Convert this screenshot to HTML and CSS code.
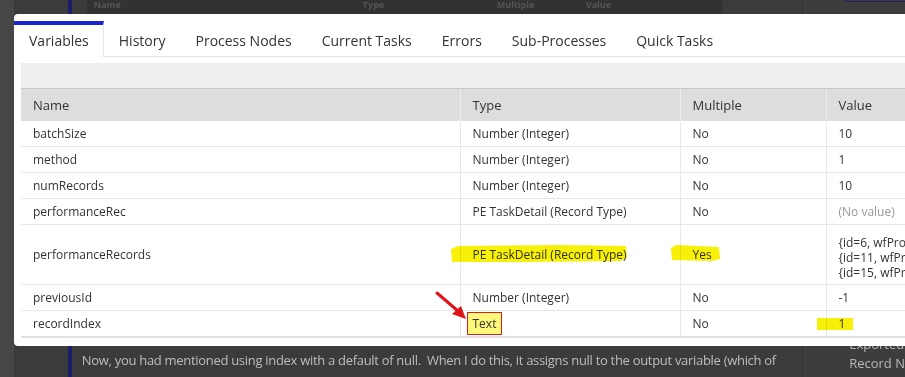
FILE: index.html
```html
<!DOCTYPE html>
<html>
	<head>
		<meta charset="UTF-8">
		<title>Process Details</title>
		<link rel="stylesheet" href="styles.css">
	</head>
	<body>
	<!-- page behind the dialog -->
	<div class="page">
		<div class="gutter"></div>
		<div class="article">
			<div class="bg-head">
				<span class="c1">Name</span>
				<span class="c2">Type</span>
				<span class="c3">Multiple</span>
				<span class="c4">Value</span>
			</div>
			<p class="bg-text">Now, you had mentioned using index with a default of null.&nbsp; When I do this, it assigns null to the output variable (which of course causes downstream failures because a record is expected)</p>
		</div>
		<div class="sidebar">
			<div class="side-box"></div>
			<p class="side-text">Exported<br>Record N<br>Wit</p>
		</div>
	</div>

	<!-- dialog -->
	<div class="modal">
		<div class="tabs">
			<a class="active" href="javascript:;">Variables</a>
			<a href="javascript:;">History</a>
			<a href="javascript:;">Process Nodes</a>
			<a href="javascript:;">Current Tasks</a>
			<a href="javascript:;">Errors</a>
			<a href="javascript:;">Sub-Processes</a>
			<a href="javascript:;">Quick Tasks</a>
		</div>
		<div class="content">
			<div class="toolbar"></div>
			<table class="vars">
				<colgroup>
					<col class="w-name">
					<col class="w-type">
					<col class="w-multi">
					<col class="w-value">
				</colgroup>
				<tr>
					<th>Name</th>
					<th>Type</th>
					<th>Multiple</th>
					<th>Value</th>
				</tr>
				<tr>
					<td>batchSize</td>
					<td>Number (Integer)</td>
					<td>No</td>
					<td>10</td>
				</tr>
				<tr>
					<td>method</td>
					<td>Number (Integer)</td>
					<td>No</td>
					<td>1</td>
				</tr>
				<tr>
					<td>numRecords</td>
					<td>Number (Integer)</td>
					<td>No</td>
					<td>10</td>
				</tr>
				<tr>
					<td>performanceRec</td>
					<td>PE TaskDetail (Record Type)</td>
					<td>No</td>
					<td class="empty">(No value)</td>
				</tr>
				<tr class="tall">
					<td>performanceRecords</td>
					<td>PE TaskDetail (Record Type)</td>
					<td>Yes</td>
					<td>
						<div class="lines">
							{id=6, wfProcessId=268436, taskName=Review}<br>
							{id=11, wfProcessId=268441, taskName=Review}<br>
							{id=15, wfProcessId=268445, taskName=Review}
						</div>
					</td>
				</tr>
				<tr>
					<td>previousId</td>
					<td>Number (Integer)</td>
					<td>No</td>
					<td>-1</td>
				</tr>
				<tr>
					<td>recordIndex</td>
					<td><span class="boxed">Text</span></td>
					<td>No</td>
					<td>1</td>
				</tr>
			</table>
		</div>
	</div>

	<!-- marker annotations drawn over the screenshot -->
	<svg class="marks" width="905" height="377" viewBox="0 0 905 377">
		<path d="M451 249 L458 246 L560 245 L626 246 L627 258 L620 261 L520 262 L452 262 Z" fill="#f7f10a"/>
		<path d="M671 248 L676 245 L719 247 L720 259 L712 261 L672 260 Z" fill="#f7f10a"/>
		<rect x="817" y="318" width="36" height="12" fill="#f7f10a"/>
		<line x1="437" y1="293" x2="458" y2="311" stroke="#e3141a" stroke-width="3" stroke-linecap="round"/>
		<path d="M466 319 L452 314 L461 306 Z" fill="#e3141a"/>
	</svg>
	</body>
</html>
```

FILE: styles.css
```css
html,body{
    margin:0;
    padding:0;
}
body{
    width:905px;
    height:377px;
    overflow:hidden;
    position:relative;
    background-color:#3b3b3b;
    font-family:"Open Sans","Liberation Sans",sans-serif;
}

/* page behind */
.page{
    display:flex;
    height:377px;
}
.gutter{
    width:54px;
    border-left:14px solid #464646;
    background-color:#3b3b3b;
}
.article{
    width:733px;
    border-left:4px solid #1b1d66;
    background-color:#3b3b3b;
}
.bg-head{
    margin-left:15px;
    width:635px;
    height:14px;
    background-color:#323232;
    position:relative;
    font-size:9px;
    font-weight:bold;
    color:#555;
    line-height:10px;
}
.bg-head span{
    position:absolute;
    top:0;
}
.bg-head .c1{left:7px;}
.bg-head .c2{left:276px;}
.bg-head .c3{left:410px;}
.bg-head .c4{left:499px;}
.bg-text{
    margin:335px 0 0 10px;
    font-size:13px;
    letter-spacing:-0.3px;
    line-height:22px;
    color:#bdbdbd;
    width:720px;
}
.sidebar{
    flex:1;
    border-left:1px solid #333;
    background-color:#3d3d3d;
}
.side-box{
    margin-left:42px;
    height:1px;
    border-left:1px solid #1b1d66;
    border-bottom:1px solid #1b1d66;
}
.side-text{
    margin:333px 0 0 46px;
    font-size:13px;
    line-height:19px;
    color:#b8b8b8;
    white-space:nowrap;
}

/* dialog */
.modal{
    position:absolute;
    left:14px;
    top:14px;
    width:1040px;
    height:332px;
    background-color:#fff;
    border-radius:4px 0 0 4px;
}
.tabs{
    display:flex;
    margin-top:7px;
    border-bottom:1px solid #e6e6e6;
}
.tabs a{
    display:block;
    padding:0 15px;
    height:31px;
    line-height:31px;
    border-top:4px solid transparent;
    font-size:14px;
    color:#333;
    text-decoration:none;
}
.tabs a.active{
    border-top-color:#1c22d6;
    border-right:1px solid #e6e6e6;
    padding-right:14px;
    background-color:#fff;
    margin-bottom:-1px;
    height:32px;
}
.content{
    padding:6px 0 0 7px;
}
.toolbar{
    height:25px;
    background-color:#eeeeee;
    border-bottom:1px solid #c8c8c8;
}
.vars{
    border-collapse:collapse;
    table-layout:fixed;
    width:1005px;
    font-size:12px;
    color:#333;
    border-bottom:2px solid #e2e2e2;
}
.w-name{width:439px;}
.w-type{width:220px;}
.w-multi{width:146px;}
.w-value{width:200px;}
.vars th{
    height:32px;
    padding:0 12px;
    text-align:left;
    font-weight:normal;
    font-size:13px;
    background-color:#dddddd;
    border-left:1px solid #eeeeee;
}
.vars th:first-child{
    border-left:none;
}
.vars td{
    height:25px;
    padding:0 12px;
    border-bottom:1px solid #e8e8e8;
    border-left:1px solid #e8e8e8;
    white-space:nowrap;
    overflow:hidden;
}
.vars td:first-child{
    border-left:none;
}
.vars tr:last-child td{
    border-bottom:none;
}
.vars tr.tall td{
    height:59px;
}
.lines{
    line-height:15px;
    padding-top:5px;
}
.vars td.empty{
    color:#999;
}
.boxed{
    background-color:#fdf77a;
    border:1px solid #d62020;
    padding:2px 5px;
    margin-left:-6px;
}
.marks{
    position:absolute;
    left:0;
    top:0;
    pointer-events:none;
    mix-blend-mode:multiply;
}
```
